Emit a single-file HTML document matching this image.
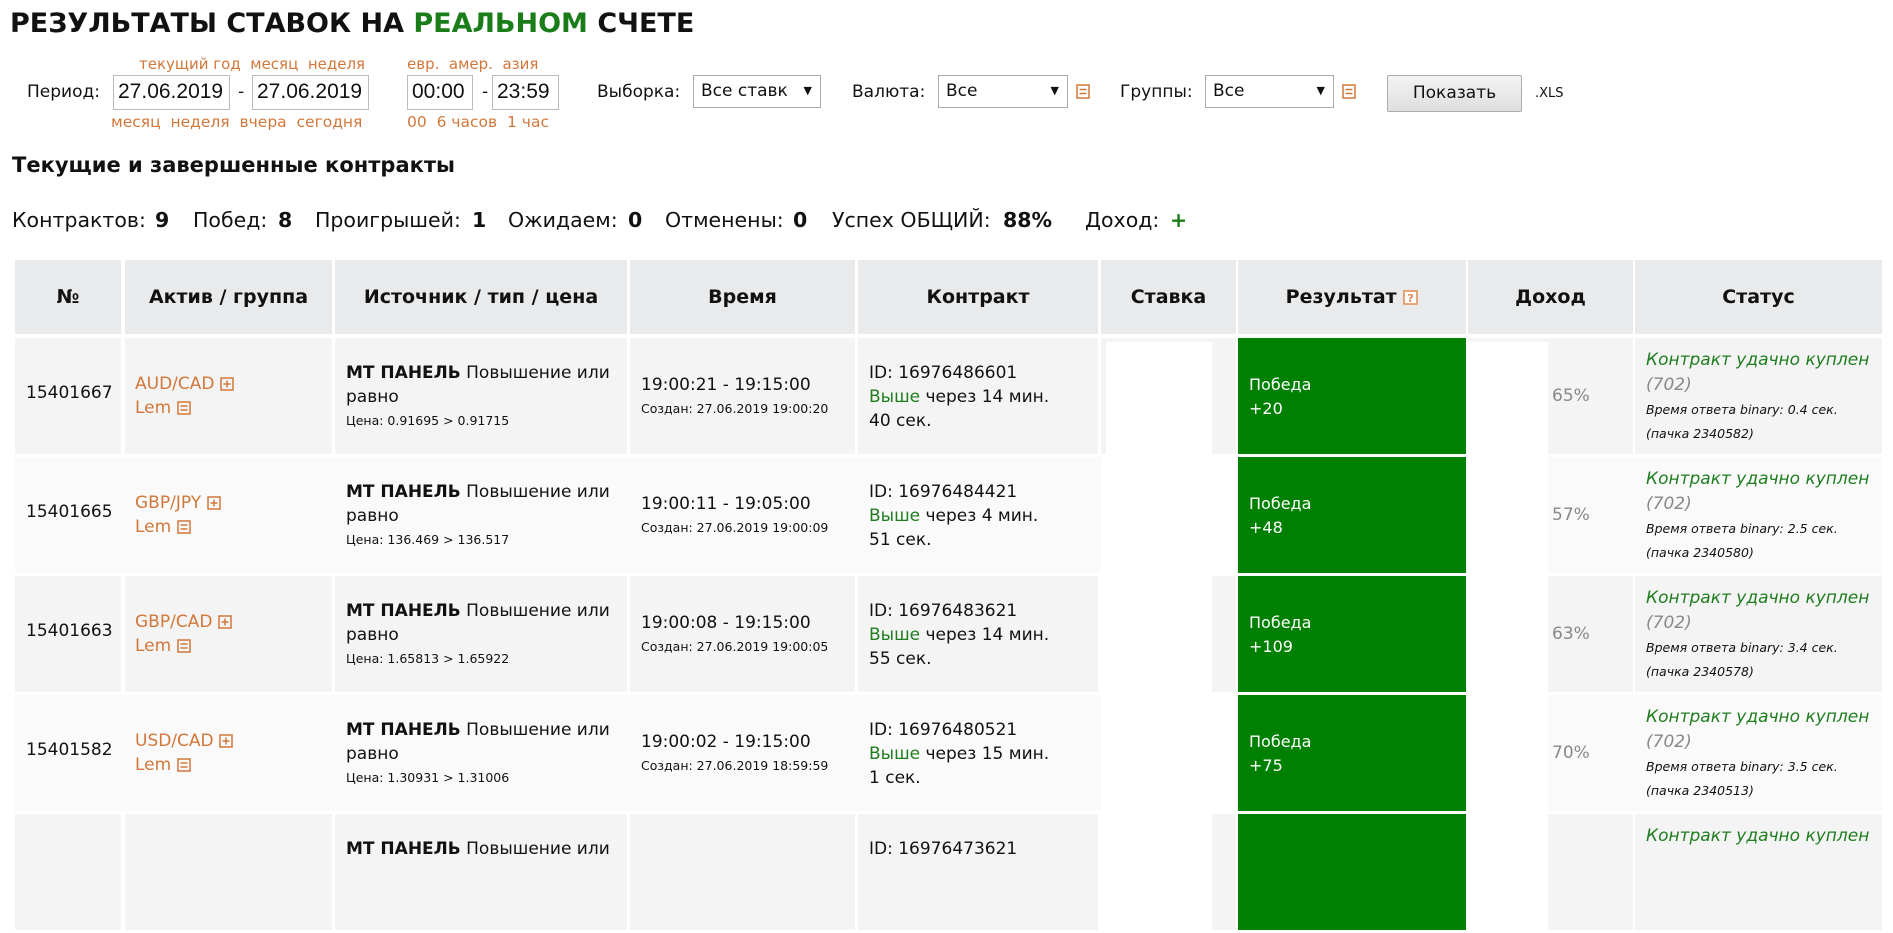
<!DOCTYPE html>
<html><head><meta charset="utf-8">
<style>
*{margin:0;padding:0;box-sizing:border-box}
body{width:1893px;height:844px;overflow:hidden;background:#fff;font-family:"DejaVu Sans","Liberation Sans",sans-serif;color:#111;position:relative}
.a{position:absolute;white-space:nowrap}
.or{color:#d2773a}
.inp{position:absolute;border:1px solid #bbb;background:#fff;font-family:"Liberation Sans",sans-serif;font-size:21px;line-height:32px;padding-left:4px;color:#111}
.sel{position:absolute;border:1px solid #aaa;background:#fff;font-family:"DejaVu Sans",sans-serif;font-size:17px;line-height:30px;padding-left:7px;color:#111}
.sel i{position:absolute;right:8px;top:0;font-style:normal;font-size:11px}
.hd{position:absolute;top:260px;height:74px;background:#e9eaeb;font-weight:bold;font-size:19px;line-height:74px;text-align:center}
.row{position:absolute;left:0;width:1893px;height:119px}
.row .c{position:absolute;top:0;height:116px}
.t{position:absolute;white-space:nowrap;font-size:17px;line-height:24px}
.s{font-size:12.5px}
.g{color:#1f7d1f}
.gr{color:#888}
.st{font-style:italic}
svg.ic{vertical-align:-2px}
</style></head><body>

<div class="a" style="left:10px;top:4px;font-size:27px;font-weight:bold;line-height:40px">РЕЗУЛЬТАТЫ СТАВОК НА <span style="color:#1a7d1a">РЕАЛЬНОМ</span> СЧЕТЕ</div>

<div class="a or" style="left:139px;top:54px;font-size:15px;line-height:20px">текущий год&nbsp; месяц&nbsp; неделя</div>
<div class="a or" style="left:407px;top:54px;font-size:15px;line-height:20px">евр.&nbsp; амер.&nbsp; азия</div>
<div class="a or" style="left:111px;top:112px;font-size:15.5px;line-height:20px">месяц&nbsp; неделя&nbsp; вчера&nbsp; сегодня</div>
<div class="a or" style="left:407px;top:112px;font-size:15.5px;line-height:20px">00&nbsp; 6 часов&nbsp; 1 час</div>

<div class="a" style="left:27px;top:80px;font-size:17px;line-height:24px">Период:</div>
<div class="inp" style="left:113px;top:75px;width:117px;height:35px">27.06.2019</div>
<div class="a" style="left:238px;top:80px;font-size:17px;line-height:24px">-</div>
<div class="inp" style="left:252px;top:75px;width:117px;height:35px">27.06.2019</div>
<div class="inp" style="left:407px;top:75px;width:66px;height:35px">00:00</div>
<div class="a" style="left:482px;top:80px;font-size:17px;line-height:24px">-</div>
<div class="inp" style="left:492px;top:75px;width:67px;height:35px">23:59</div>

<div class="a" style="left:597px;top:80px;font-size:17px;line-height:24px">Выборка:</div>
<div class="sel" style="left:693px;top:75px;width:128px;height:33px">Все ставк<i>▼</i></div>
<div class="a" style="left:852px;top:80px;font-size:17px;line-height:24px">Валюта:</div>
<div class="sel" style="left:938px;top:75px;width:130px;height:33px">Все<i>▼</i></div>
<svg class="a" style="left:1076px;top:84px" width="14" height="15" viewBox="0 0 14 15"><rect x="1" y="1" width="12" height="13" fill="none" stroke="#d2773a" stroke-width="1.5"/><path d="M3.5 5.5h7M3.5 9.5h7" stroke="#d2773a" stroke-width="1.5"/></svg>
<div class="a" style="left:1120px;top:80px;font-size:17px;line-height:24px">Группы:</div>
<div class="sel" style="left:1205px;top:75px;width:129px;height:33px">Все<i>▼</i></div>
<svg class="a" style="left:1342px;top:84px" width="14" height="15" viewBox="0 0 14 15"><rect x="1" y="1" width="12" height="13" fill="none" stroke="#d2773a" stroke-width="1.5"/><path d="M3.5 5.5h7M3.5 9.5h7" stroke="#d2773a" stroke-width="1.5"/></svg>
<div class="a" style="left:1387px;top:75px;width:135px;height:37px;border:1px solid #adadad;border-radius:2px;background:linear-gradient(#f4f4f4,#dedede);font-size:17px;line-height:35px;text-align:center">Показать</div>
<div class="a" style="left:1535px;top:85px;font-size:13px;line-height:18px">.XLS</div>

<div class="a" style="left:12px;top:151px;font-size:21px;font-weight:bold;line-height:28px">Текущие и завершенные контракты</div>

<div style="position:absolute;top:206px;left:0;font-size:20.5px;line-height:28px">
<span class="a" style="left:12px">Контрактов:</span><b class="a" style="left:155px">9</b>
<span class="a" style="left:193px">Побед:</span><b class="a" style="left:278px">8</b>
<span class="a" style="left:315px">Проигрышей:</span><b class="a" style="left:472px">1</b>
<span class="a" style="left:508px">Ожидаем:</span><b class="a" style="left:628px">0</b>
<span class="a" style="left:665px">Отменены:</span><b class="a" style="left:793px">0</b>
<span class="a" style="left:832px">Успех ОБЩИЙ:</span><b class="a" style="left:1003px">88%</b>
<span class="a" style="left:1085px">Доход:</span><b class="a" style="left:1170px;color:#1a7d1a">+</b>
</div>

<div class="hd" style="left:15px;width:106px">№</div>
<div class="hd" style="left:125px;width:207px">Актив / группа</div>
<div class="hd" style="left:335px;width:292px">Источник / тип / цена</div>
<div class="hd" style="left:630px;width:225px">Время</div>
<div class="hd" style="left:858px;width:240px">Контракт</div>
<div class="hd" style="left:1101px;width:135px">Ставка</div>
<div class="hd" style="left:1238px;width:228px">Результат <svg class="ic" width="15" height="15" viewBox="0 0 15 15"><rect x="1" y="1" width="13" height="13" fill="#fff" stroke="#e08a50" stroke-width="1.5"/><text x="7.5" y="12" font-size="11" text-anchor="middle" fill="#e08a50" font-family="DejaVu Sans">?</text></svg></div>
<div class="hd" style="left:1468px;width:165px">Доход</div>
<div class="hd" style="left:1635px;width:247px">Статус</div>

<div class="row" style="top:338px">
<div class="c" style="left:15px;width:106px;background:#f4f4f4"></div><div class="c" style="left:125px;width:207px;background:#f4f4f4"></div><div class="c" style="left:335px;width:292px;background:#f4f4f4"></div><div class="c" style="left:630px;width:225px;background:#f4f4f4"></div><div class="c" style="left:858px;width:240px;background:#f4f4f4"></div><div class="c" style="left:1101px;width:135px;background:#f4f4f4"></div><div class="c" style="left:1106px;width:106px;top:4px;background:#fff"></div><div class="c" style="left:1238px;width:228px;background:#008000"></div><div class="c" style="left:1468px;width:165px;background:#f4f4f4"></div><div class="c" style="left:1468px;width:80px;top:4px;background:#fff"></div><div class="c" style="left:1635px;width:247px;background:#f4f4f4"></div>
<div class="t" style="left:26px;top:43px">15401667</div>
<div class="t or" style="left:135px;top:34px">AUD/CAD <svg class="ic" width="14" height="14" viewBox="0 0 14 14"><rect x="1" y="1" width="12" height="12" fill="none" stroke="#d2773a" stroke-width="1.5"/><path d="M3.5 7h7M7 3.5v7" stroke="#d2773a" stroke-width="1.5"/></svg></div>
<div class="t or" style="left:135px;top:58px">Lem <svg class="ic" width="14" height="14" viewBox="0 0 14 14"><rect x="1" y="1" width="12" height="12" fill="none" stroke="#d2773a" stroke-width="1.5"/><path d="M3.5 5h7M3.5 9h7" stroke="#d2773a" stroke-width="1.5"/></svg></div>
<div class="t" style="left:346px;top:23px"><b>МТ ПАНЕЛЬ</b> Повышение или</div>
<div class="t" style="left:346px;top:47px">равно</div>
<div class="t s" style="left:346px;top:71px">Цена: 0.91695 &gt; 0.91715</div>
<div class="t" style="left:641px;top:35px">19:00:21 - 19:15:00</div>
<div class="t s" style="left:641px;top:59px">Создан: 27.06.2019 19:00:20</div>
<div class="t" style="left:869px;top:23px">ID: 16976486601</div>
<div class="t" style="left:869px;top:47px"><span class="g">Выше</span> через 14 мин.</div>
<div class="t" style="left:869px;top:71px">40 сек.</div>
<div class="t" style="left:1249px;top:35px;color:#fff;font-size:16px">Победа</div>
<div class="t" style="left:1249px;top:59px;color:#fff;font-size:16px">+20</div>
<div class="t gr" style="left:1552px;top:46px">65%</div>
<div class="t g st" style="left:1646px;top:10px">Контракт удачно куплен</div>
<div class="t gr st" style="left:1646px;top:35px">(702)</div>
<div class="t s st" style="left:1646px;top:60px">Время ответа binary: 0.4 сек.</div>
<div class="t s st" style="left:1646px;top:84px">(пачка 2340582)</div>
</div>

<div class="row" style="top:457px">
<div class="c" style="left:15px;width:1867px;background:#fafafa"></div><div class="c" style="left:1101px;width:135px;background:#fff"></div><div class="c" style="left:1238px;width:228px;background:#008000"></div><div class="c" style="left:1468px;width:80px;background:#fff"></div>
<div class="t" style="left:26px;top:43px">15401665</div>
<div class="t or" style="left:135px;top:34px">GBP/JPY <svg class="ic" width="14" height="14" viewBox="0 0 14 14"><rect x="1" y="1" width="12" height="12" fill="none" stroke="#d2773a" stroke-width="1.5"/><path d="M3.5 7h7M7 3.5v7" stroke="#d2773a" stroke-width="1.5"/></svg></div>
<div class="t or" style="left:135px;top:58px">Lem <svg class="ic" width="14" height="14" viewBox="0 0 14 14"><rect x="1" y="1" width="12" height="12" fill="none" stroke="#d2773a" stroke-width="1.5"/><path d="M3.5 5h7M3.5 9h7" stroke="#d2773a" stroke-width="1.5"/></svg></div>
<div class="t" style="left:346px;top:23px"><b>МТ ПАНЕЛЬ</b> Повышение или</div>
<div class="t" style="left:346px;top:47px">равно</div>
<div class="t s" style="left:346px;top:71px">Цена: 136.469 &gt; 136.517</div>
<div class="t" style="left:641px;top:35px">19:00:11 - 19:05:00</div>
<div class="t s" style="left:641px;top:59px">Создан: 27.06.2019 19:00:09</div>
<div class="t" style="left:869px;top:23px">ID: 16976484421</div>
<div class="t" style="left:869px;top:47px"><span class="g">Выше</span> через 4 мин.</div>
<div class="t" style="left:869px;top:71px">51 сек.</div>
<div class="t" style="left:1249px;top:35px;color:#fff;font-size:16px">Победа</div>
<div class="t" style="left:1249px;top:59px;color:#fff;font-size:16px">+48</div>
<div class="t gr" style="left:1552px;top:46px">57%</div>
<div class="t g st" style="left:1646px;top:10px">Контракт удачно куплен</div>
<div class="t gr st" style="left:1646px;top:35px">(702)</div>
<div class="t s st" style="left:1646px;top:60px">Время ответа binary: 2.5 сек.</div>
<div class="t s st" style="left:1646px;top:84px">(пачка 2340580)</div>
</div>

<div class="row" style="top:576px">
<div class="c" style="left:15px;width:106px;background:#f4f4f4"></div><div class="c" style="left:125px;width:207px;background:#f4f4f4"></div><div class="c" style="left:335px;width:292px;background:#f4f4f4"></div><div class="c" style="left:630px;width:225px;background:#f4f4f4"></div><div class="c" style="left:858px;width:240px;background:#f4f4f4"></div><div class="c" style="left:1101px;width:135px;background:#f4f4f4"></div><div class="c" style="left:1101px;width:111px;background:#fff"></div><div class="c" style="left:1238px;width:228px;background:#008000"></div><div class="c" style="left:1468px;width:165px;background:#f4f4f4"></div><div class="c" style="left:1468px;width:80px;background:#fff"></div><div class="c" style="left:1635px;width:247px;background:#f4f4f4"></div>
<div class="t" style="left:26px;top:43px">15401663</div>
<div class="t or" style="left:135px;top:34px">GBP/CAD <svg class="ic" width="14" height="14" viewBox="0 0 14 14"><rect x="1" y="1" width="12" height="12" fill="none" stroke="#d2773a" stroke-width="1.5"/><path d="M3.5 7h7M7 3.5v7" stroke="#d2773a" stroke-width="1.5"/></svg></div>
<div class="t or" style="left:135px;top:58px">Lem <svg class="ic" width="14" height="14" viewBox="0 0 14 14"><rect x="1" y="1" width="12" height="12" fill="none" stroke="#d2773a" stroke-width="1.5"/><path d="M3.5 5h7M3.5 9h7" stroke="#d2773a" stroke-width="1.5"/></svg></div>
<div class="t" style="left:346px;top:23px"><b>МТ ПАНЕЛЬ</b> Повышение или</div>
<div class="t" style="left:346px;top:47px">равно</div>
<div class="t s" style="left:346px;top:71px">Цена: 1.65813 &gt; 1.65922</div>
<div class="t" style="left:641px;top:35px">19:00:08 - 19:15:00</div>
<div class="t s" style="left:641px;top:59px">Создан: 27.06.2019 19:00:05</div>
<div class="t" style="left:869px;top:23px">ID: 16976483621</div>
<div class="t" style="left:869px;top:47px"><span class="g">Выше</span> через 14 мин.</div>
<div class="t" style="left:869px;top:71px">55 сек.</div>
<div class="t" style="left:1249px;top:35px;color:#fff;font-size:16px">Победа</div>
<div class="t" style="left:1249px;top:59px;color:#fff;font-size:16px">+109</div>
<div class="t gr" style="left:1552px;top:46px">63%</div>
<div class="t g st" style="left:1646px;top:10px">Контракт удачно куплен</div>
<div class="t gr st" style="left:1646px;top:35px">(702)</div>
<div class="t s st" style="left:1646px;top:60px">Время ответа binary: 3.4 сек.</div>
<div class="t s st" style="left:1646px;top:84px">(пачка 2340578)</div>
</div>

<div class="row" style="top:695px">
<div class="c" style="left:15px;width:1867px;background:#fafafa"></div><div class="c" style="left:1101px;width:135px;background:#fff"></div><div class="c" style="left:1238px;width:228px;background:#008000"></div><div class="c" style="left:1468px;width:80px;background:#fff"></div>
<div class="t" style="left:26px;top:43px">15401582</div>
<div class="t or" style="left:135px;top:34px">USD/CAD <svg class="ic" width="14" height="14" viewBox="0 0 14 14"><rect x="1" y="1" width="12" height="12" fill="none" stroke="#d2773a" stroke-width="1.5"/><path d="M3.5 7h7M7 3.5v7" stroke="#d2773a" stroke-width="1.5"/></svg></div>
<div class="t or" style="left:135px;top:58px">Lem <svg class="ic" width="14" height="14" viewBox="0 0 14 14"><rect x="1" y="1" width="12" height="12" fill="none" stroke="#d2773a" stroke-width="1.5"/><path d="M3.5 5h7M3.5 9h7" stroke="#d2773a" stroke-width="1.5"/></svg></div>
<div class="t" style="left:346px;top:23px"><b>МТ ПАНЕЛЬ</b> Повышение или</div>
<div class="t" style="left:346px;top:47px">равно</div>
<div class="t s" style="left:346px;top:71px">Цена: 1.30931 &gt; 1.31006</div>
<div class="t" style="left:641px;top:35px">19:00:02 - 19:15:00</div>
<div class="t s" style="left:641px;top:59px">Создан: 27.06.2019 18:59:59</div>
<div class="t" style="left:869px;top:23px">ID: 16976480521</div>
<div class="t" style="left:869px;top:47px"><span class="g">Выше</span> через 15 мин.</div>
<div class="t" style="left:869px;top:71px">1 сек.</div>
<div class="t" style="left:1249px;top:35px;color:#fff;font-size:16px">Победа</div>
<div class="t" style="left:1249px;top:59px;color:#fff;font-size:16px">+75</div>
<div class="t gr" style="left:1552px;top:46px">70%</div>
<div class="t g st" style="left:1646px;top:10px">Контракт удачно куплен</div>
<div class="t gr st" style="left:1646px;top:35px">(702)</div>
<div class="t s st" style="left:1646px;top:60px">Время ответа binary: 3.5 сек.</div>
<div class="t s st" style="left:1646px;top:84px">(пачка 2340513)</div>
</div>

<div class="row" style="top:814px">
<div class="c" style="left:15px;width:106px;background:#f4f4f4"></div><div class="c" style="left:125px;width:207px;background:#f4f4f4"></div><div class="c" style="left:335px;width:292px;background:#f4f4f4"></div><div class="c" style="left:630px;width:225px;background:#f4f4f4"></div><div class="c" style="left:858px;width:240px;background:#f4f4f4"></div><div class="c" style="left:1101px;width:135px;background:#f4f4f4"></div><div class="c" style="left:1101px;width:111px;background:#fff"></div><div class="c" style="left:1238px;width:228px;background:#008000"></div><div class="c" style="left:1468px;width:165px;background:#f4f4f4"></div><div class="c" style="left:1468px;width:80px;background:#fff"></div><div class="c" style="left:1635px;width:247px;background:#f4f4f4"></div>
<div class="t" style="left:346px;top:23px"><b>МТ ПАНЕЛЬ</b> Повышение или</div>
<div class="t" style="left:869px;top:23px">ID: 16976473621</div>
<div class="t g st" style="left:1646px;top:10px">Контракт удачно куплен</div>
</div>

</body></html>
